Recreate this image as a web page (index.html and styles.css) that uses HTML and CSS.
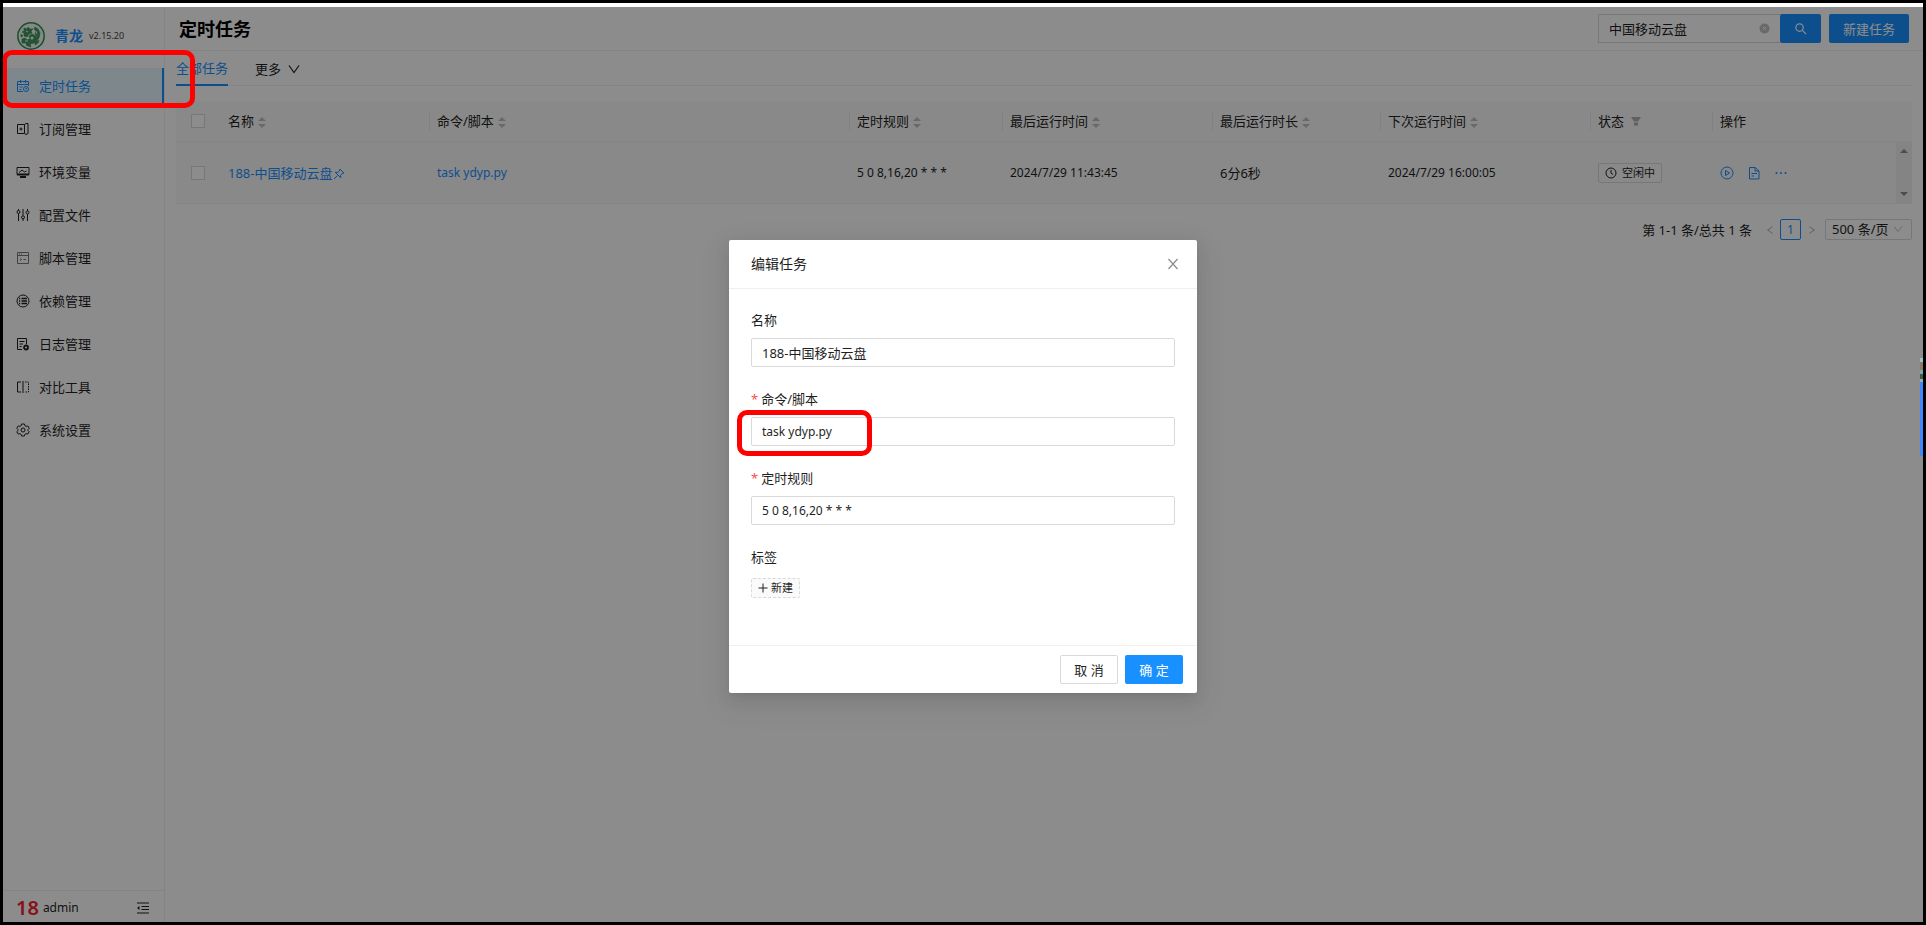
FILE: index.html
```html
<!DOCTYPE html>
<html lang="zh-CN">
<head>
<meta charset="utf-8">
<title>定时任务 - 青龙</title>
<link rel="stylesheet" href="styles.css">
</head>
<body>
<div class="app">
  <aside class="sidebar">
    <div class="brand">
      <svg class="brand-logo" viewBox="0 0 28 28">
        <circle cx="14" cy="14" r="13.2" fill="#f2f7f3" stroke="#2b9150" stroke-width="1.500"/>
        <g fill="#3f9a60" stroke="#2f8a50" stroke-width=".6" stroke-linejoin="round">
          <path d="M7 6l3 1 1-2 2 2 3 0-2 2 1 2-3 1-2 3-3-1 0-3-2-1 2-1z"/>
          <path d="M18 5l3 2 2 4-1 5-2 2 0-4-2-2 1-3-2-2z"/>
          <path d="M5 17l3-1 2 2 3-1-1-3 3-2 4 2 1 4-3 3-4 1 1 3-3-1-2-3-4 0z"/>
          <path d="M18 20l4-2-1 3-3 2zM4 12l2 2-2 1zM9 22l2 1-1 1z"/>
        </g>
        <circle cx="15" cy="16" r="1.500" fill="#f2f7f3"/>
        <path d="M9 9l2 1M19 9l1 3M8 19l3 0" stroke="#f2f7f3" fill="none"/>
      </svg>
      <span class="brand-name">青龙</span>
      <span class="brand-version">v2.15.20</span>
    </div>
    <nav class="menu">
      <a class="menu-item active" href="#">
        <svg viewBox="0 0 14 14"><path d="M7 12.500H1.500v-10h11V7M1.500 5.500h11M4.500 1v3M9.500 1v3M3.500 8h3M3.500 10.500h2"/><circle cx="10" cy="10" r="2.500"/><path d="M10 8.800V10h1"/></svg>
        定时任务</a>
      <a class="menu-item" href="#">
        <svg viewBox="0 0 14 14"><path d="M1.500 2.500h7v9h-7zM8.500 2.500l1.500-1h2v10l-2 1-1.500-1M3.500 7h3M5 5.500v3"/></svg>
        订阅管理</a>
      <a class="menu-item" href="#">
        <svg viewBox="0 0 14 14"><path d="M1 2.500h12v7H1zM3 7.500l3-2.500 2.500 2 2-1"/><path d="M1 9.500h12M4 12h6" stroke-width="2"/></svg>
        环境变量</a>
      <a class="menu-item" href="#">
        <svg viewBox="0 0 14 14"><path d="M2.500 1v1.500M2.500 5.500V13M7 1v6.500M7 11v2M11.500 1v2M11.500 6v7"/><circle cx="2.500" cy="4" r="1.500"/><circle cx="7" cy="9.300" r="1.500"/><circle cx="11.500" cy="4.500" r="1.500"/></svg>
        配置文件</a>
      <a class="menu-item light" href="#">
        <svg viewBox="0 0 14 14"><path d="M1.500 1.500h11v11h-11zM1.500 4.500h11M3 3h1M5 3h1M4 7.500l1.500 1L4 9.500M7.500 8.500H10"/></svg>
        脚本管理</a>
      <a class="menu-item" href="#">
        <svg viewBox="0 0 14 14"><circle cx="7" cy="7" r="6"/><path d="M5.500 4.500H11M5.500 7H11M5.500 9.500H11M3 4.500h1.200M3 7h1.200M3 9.500h1.200" stroke-width="1.500"/></svg>
        依赖管理</a>
      <a class="menu-item" href="#">
        <svg viewBox="0 0 14 14"><path d="M6 12.500H1.500v-11h9V7M3.500 4.500h5M3.500 7H7M3.500 9.500h2"/><circle cx="10" cy="10.500" r="2" stroke-width="1.800"/></svg>
        日志管理</a>
      <a class="menu-item" href="#">
        <svg viewBox="0 0 14 14"><path d="M5 2H1.500v10H5M7 1v12"/><path d="M9 2h3.500v10H9" stroke-dasharray="1.500 1"/></svg>
        对比工具</a>
      <a class="menu-item" href="#">
        <svg viewBox="0 0 14 14"><path d="M5.600 1h2.800l.5 1.700 1.200.7 1.700-.5 1.400 2.400L12 6.500v1l1.200 1.200-1.400 2.400-1.700-.5-1.200.7-.5 1.700H5.600l-.5-1.700-1.200-.7-1.700.5L.8 8.700 2 7.500v-1L.8 5.300l1.400-2.400 1.700.5 1.200-.7z"/><circle cx="7" cy="7" r="2"/></svg>
        系统设置</a>
    </nav>
    <div class="account">
      <span class="account-avatar">18</span>
      <span class="account-name">admin</span>
      <button class="icon-button" type="button" aria-label="收起菜单">
        <svg viewBox="0 0 14 14" fill="none" stroke="currentColor" stroke-width="1.200"><path d="M1 2h12M5.500 5.500H13M5.500 8.500H13M1 12h12"/><path d="M3.500 5v4L1 7z" fill="currentColor" stroke="none"/></svg>
      </button>
    </div>
  </aside>

  <div class="main">
    <header class="page-header">
      <h1>定时任务</h1>
      <form class="search">
        <input type="text" value="中国移动云盘" aria-label="搜索">
        <svg class="search-clear" viewBox="0 0 12 12"><circle cx="6" cy="6" r="5.500" fill="#bfbfbf"/><path d="M4.200 4.200l3.600 3.600M7.800 4.200L4.200 7.800" stroke="#fff"/></svg>
        <button class="primary search-button" type="button" aria-label="搜索"><svg viewBox="0 0 14 14" fill="none" stroke="currentColor" stroke-width="1.300"><circle cx="6" cy="6" r="4"/><path d="M9 9l4 4"/></svg></button>
      </form>
      <button class="primary create" type="button">新建任务</button>
    </header>

    <section class="content">
      <div class="tabs">
        <a class="tab active" href="#">全部任务</a>
        <a class="tab" href="#">更多
          <svg viewBox="0 0 12 12" fill="none" stroke="currentColor" stroke-width="1.200"><path d="M1 2.500L6 9.500l5-7"/></svg></a>
      </div>

      <div class="table-wrap">
        <table>
          <colgroup><col class="c-check"><col class="c-name"><col><col class="c-rule"><col class="c-time"><col class="c-span"><col class="c-time"><col class="c-state"><col class="c-action"></colgroup>
          <thead>
            <tr>
              <th class="check"><input type="checkbox" aria-label="全选"></th>
              <th>名称<i class="sorter"></i></th>
              <th>命令/脚本<i class="sorter"></i></th>
              <th>定时规则<i class="sorter"></i></th>
              <th>最后运行时间<i class="sorter"></i></th>
              <th>最后运行时长<i class="sorter"></i></th>
              <th>下次运行时间<i class="sorter"></i></th>
              <th>状态<svg class="filter" viewBox="0 0 10 10"><path d="M0 1h10L7 5.500H3zM3 6.500h4v3H3z" fill="#b0b0b0"/></svg></th>
              <th>操作</th>
            </tr>
          </thead>
          <tbody>
            <tr>
              <td class="check"><input type="checkbox" aria-label="选择"></td>
              <td><a href="#">188-中国移动云盘<svg class="pin" viewBox="0 0 12 12" fill="none" stroke="currentColor"><path d="M7 1l4 4-2 .5-1.500 2 .3 2.300L2.200 4.200l2.300.3 2-1.500zM4.500 7.500L1 11"/></svg></a></td>
              <td class="latin"><a href="#">task ydyp.py</a></td>
              <td class="latin">5 0 8,16,20 * * *</td>
              <td class="latin">2024/7/29 11:43:45</td>
              <td>6分6秒</td>
              <td class="latin">2024/7/29 16:00:05</td>
              <td><span class="tag"><svg viewBox="0 0 12 12" fill="none" stroke="currentColor"><circle cx="6" cy="6" r="5"/><path d="M6 3v3.200l2 1.300"/></svg>空闲中</span></td>
              <td><div class="actions">
                <a href="#" aria-label="运行"><svg viewBox="0 0 14 14" fill="none" stroke="currentColor"><circle cx="7" cy="7" r="6"/><path d="M5.500 4.500v5L9.500 7z"/></svg></a>
                <a href="#" aria-label="日志"><svg viewBox="0 0 14 14" fill="none" stroke="currentColor"><path d="M2.500 1.500H8L12 5v8H2.500zM8 1.500V5h4M4.500 7.500H10M4.500 10H7"/></svg></a>
                <a href="#" aria-label="更多"><svg viewBox="0 0 14 14" fill="currentColor"><circle cx="2.500" cy="7" r="1"/><circle cx="7" cy="7" r="1"/><circle cx="11.500" cy="7" r="1"/></svg></a>
              </div></td>
            </tr>
          </tbody>
        </table>
        <div class="scrollbar"><i class="up"></i><i class="down"></i></div>
      </div>

      <div class="pagination">
        <span class="total">第 1-1 条/总共 1 条</span>
        <button class="arrow" type="button" aria-label="上一页"><svg viewBox="0 0 10 10" fill="none" stroke="currentColor"><path d="M8 1L2 5l6 4"/></svg></button>
        <button class="page" type="button">1</button>
        <button class="arrow" type="button" aria-label="下一页"><svg viewBox="0 0 10 10" fill="none" stroke="currentColor"><path d="M2 1l6 4-6 4"/></svg></button>
        <span class="size">
          <select aria-label="每页条数"><option>500 条/页</option></select>
          <svg viewBox="0 0 10 10" fill="none" stroke="currentColor"><path d="M1 2.500l4 5 4-5"/></svg>
        </span>
      </div>
    </section>
  </div>

  <div class="side-widget"></div>
  <div class="mask">
    <div class="modal" role="dialog" aria-labelledby="modal-title">
      <div class="modal-header">
        <h2 id="modal-title">编辑任务</h2>
        <button class="close" type="button" aria-label="关闭"><svg viewBox="0 0 12 12" fill="none" stroke="currentColor" stroke-width="1.200"><path d="M1.500 1l9 10M10.500 1l-9 10"/></svg></button>
      </div>
      <form class="modal-body">
        <div class="field">
          <label for="name">名称</label>
          <input id="name" type="text" value="188-中国移动云盘">
        </div>
        <div class="field">
          <label class="required" for="command">命令/脚本</label>
          <div class="control">
            <input id="command" class="latin" type="text" value="task ydyp.py">
            <span class="highlight highlight-command"></span>
          </div>
        </div>
        <div class="field">
          <label class="required" for="rule">定时规则</label>
          <input id="rule" class="latin" type="text" value="5 0 8,16,20 * * *">
        </div>
        <div class="field tag-field">
          <label for="new-tag">标签</label>
          <button id="new-tag" class="new-tag" type="button"><svg viewBox="0 0 10 10" fill="none" stroke="currentColor"><path d="M5 .5v9M.5 5h9"/></svg>新建</button>
        </div>
      </form>
      <div class="modal-footer">
        <button class="default" type="button">取 消</button>
        <button class="primary" type="button">确 定</button>
      </div>
    </div>
  </div>
  <span class="highlight highlight-menu"></span>
</div>
</body>
</html>
```
FILE: styles.css
```css
* { box-sizing: border-box; }

body {
  margin: 0;
  height: 100vh;
  padding-top: 4px;
  border: 3px solid #000;
  background: #fff;
  color: #1f1f1f;
  font: 13px/20px "Noto Sans", "Noto Sans CJK SC", sans-serif;
  display: flex;
}

a { color: #1890ff; text-decoration: none; }
h1, h2 { margin: 0; }
svg { display: block; flex: none; }

button, input, select { font: inherit; color: inherit; margin: 0; }
button { cursor: pointer; padding: 0; border: 0; background: none; }

.latin { font-size: 12px; }

.app { position: relative; flex: 1; display: flex; min-width: 0; }

/* Sidebar */
.sidebar {
  width: 162px;
  flex: none;
  display: flex;
  flex-direction: column;
  border-right: 1px solid #f0f0f0;
}
.brand { height: 61px; padding: 0 14px 4px; display: flex; align-items: center; gap: 6px; }
.brand-logo { width: 28px; height: 28px; margin-right: 4px; }
.brand-name { color: #1890ff; font-size: 14px; font-weight: 700; }
.brand-version { font-size: 9px; color: #444; }

.menu { flex: 1; display: flex; flex-direction: column; gap: 8px; }
.menu-item {
  height: 35px;
  padding: 0 13px;
  display: flex;
  align-items: center;
  gap: 9px;
  color: #1f1f1f;
}
.menu-item svg { width: 14px; height: 14px; fill: none; stroke: currentColor; stroke-width: 1; }
.menu-item.light svg { opacity: .6; }
.menu-item.active { color: #1890ff; background: #e6f7ff; border-right: 2px solid #1890ff; }

.account {
  height: 32px;
  padding: 2px 14px 0 13px;
  border-top: 1px solid #f0f0f0;
  display: flex;
  align-items: center;
  gap: 4px;
}
.account-avatar { color: #f5222d; font-size: 20px; font-weight: 600; }
.account-name { font-size: 12px; }
.icon-button { margin-left: auto; }
.icon-button svg { width: 14px; height: 14px; }

/* Header */
.main { flex: 1; min-width: 0; }
.page-header {
  height: 44px;
  padding: 0 14px;
  border-bottom: 1px solid #f0f0f0;
  display: flex;
  align-items: center;
}
.page-header h1 { flex: 1; font-size: 18px; line-height: 28px; font-weight: 700; color: #000; }
.search { position: relative; display: flex; margin-right: 8px; }
.search input {
  width: 182px;
  height: 29px;
  padding: 0 32px 0 10px;
  border: 1px solid #d9d9d9;
  border-right: 0;
  background: #fff;
}
.search-clear { position: absolute; right: 51px; top: 9px; width: 11px; height: 11px; }
.primary { height: 29px; border-radius: 2px; background: #1890ff; color: #fff; }
.search-button { width: 41px; display: grid; place-items: center; }
.search-button svg { width: 13px; height: 13px; }
.create { width: 80px; }

/* Tabs */
.content { padding: 0 11px; }
.tabs { height: 35px; border-bottom: 1px solid #f0f0f0; display: flex; gap: 27px; }
.tab { height: 35px; display: flex; align-items: center; gap: 7px; color: #1f1f1f; }
.tab svg { width: 12px; height: 12px; }
.tab.active { color: #1890ff; border-bottom: 2px solid #1890ff; }

/* Table */
.table-wrap { position: relative; margin-top: 15px; }
table { width: 100%; table-layout: fixed; border-collapse: separate; border-spacing: 0; }
.c-check { width: 44px; }
.c-name { width: 209px; }
.c-rule { width: 153px; }
.c-time { width: 210px; }
.c-span { width: 168px; }
.c-state { width: 122px; }
.c-action { width: 200px; }
th, td { padding: 0 8px; text-align: left; font-weight: 400; background: #fafafa; border-bottom: 1px solid #f0f0f0; white-space: nowrap; }
th { height: 41px; position: relative; }
td { height: 62px; }
th:not(.check):not(:nth-child(2))::before {
  content: "";
  position: absolute;
  left: 0;
  top: 11px;
  height: 19px;
  border-left: 1px solid #ececec;
}
.check { text-align: center; }
input[type="checkbox"] {
  appearance: none;
  display: block;
  width: 14px;
  height: 14px;
  margin: 0 auto;
  border: 1px solid #d9d9d9;
  background: #fff;
}
.sorter { display: inline-flex; flex-direction: column; gap: 3px; margin-left: 4px; vertical-align: middle; }
.sorter::before, .sorter::after { content: ""; border: 4px solid transparent; }
.sorter::before { border-top: 0; border-bottom-color: #bfbfbf; }
.sorter::after { border-bottom: 0; border-top-color: #bfbfbf; }
.filter { display: inline-block; width: 10px; height: 10px; margin-left: 7px; }
.pin { display: inline-block; width: 12px; height: 12px; vertical-align: middle; }
.tag {
  display: inline-flex;
  align-items: center;
  gap: 5px;
  height: 20px;
  padding: 0 6px;
  border: 1px solid #d9d9d9;
  border-radius: 2px;
  font-size: 11px;
  vertical-align: middle;
}
.tag svg { width: 12px; height: 12px; }
.actions { display: flex; gap: 13px; }
.actions svg { width: 14px; height: 14px; }
.scrollbar {
  position: absolute;
  right: 0;
  top: 41px;
  bottom: 1px;
  width: 16px;
  padding: 7px 0;
  background: #f1f1f1;
  display: flex;
  flex-direction: column;
  align-items: center;
  justify-content: space-between;
}
.scrollbar i { border: 4px solid transparent; }
.scrollbar .up { border-top: 0; border-bottom-color: #8c8c8c; }
.scrollbar .down { border-bottom: 0; border-top-color: #8c8c8c; }

/* Pagination */
.pagination { margin-top: 15px; display: flex; justify-content: flex-end; align-items: center; }
.total { margin-right: 8px; }
.arrow { width: 19px; height: 21px; color: #999; display: grid; place-items: center; }
.arrow svg { width: 8px; height: 10px; }
.page { width: 21px; height: 21px; border: 1px solid #1890ff; border-radius: 2px; color: #1890ff; font-size: 12px; line-height: 19px; margin: 0 1px; }
.size { position: relative; margin-left: 4px; color: #1f1f1f; }
.size select {
  display: block;
  appearance: none;
  width: 87px;
  height: 21px;
  padding: 0 6px;
  border: 1px solid #d9d9d9;
  border-radius: 2px;
  background: #fff;
  line-height: 19px;
}
.size svg { position: absolute; right: 9px; top: 5px; width: 10px; height: 10px; color: #bfbfbf; pointer-events: none; }

/* Floating widget at the right edge */
.side-widget {
  position: absolute;
  z-index: 3;
  right: 0;
  top: 351px;
  width: 3px;
  height: 98px;
  background: linear-gradient(#9cc4c4 0 4px, #8a7a6c 4px 12px, #78a8a8 12px 16px, #46564c 16px 21px, #8cb4b4 21px 24px, #4086ff 24px);
}

/* Modal */
.mask {
  position: absolute;
  inset: 0;
  z-index: 2;
  background: rgba(0, 0, 0, .45);
  display: flex;
  justify-content: center;
  align-items: flex-start;
  padding-top: 233px;
}
.modal {
  width: 468px;
  border-radius: 2px;
  background: #fff;
  box-shadow: 0 3px 6px -4px rgba(0, 0, 0, .12), 0 6px 16px rgba(0, 0, 0, .08), 0 9px 28px 8px rgba(0, 0, 0, .05);
}
.modal-header {
  height: 49px;
  padding: 0 18px 0 22px;
  border-bottom: 1px solid #f0f0f0;
  display: flex;
  align-items: center;
  justify-content: space-between;
}
.modal-header h2 { font-size: 14px; font-weight: 400; }
.close { color: #8c8c8c; }
.close svg { width: 12px; height: 12px; }
.modal-body { padding: 21px 22px 47px; display: flex; flex-direction: column; gap: 22px; }
.field { display: flex; flex-direction: column; align-items: flex-start; gap: 8px; }
.tag-field { gap: 11px; }
.required::before { content: "*"; color: #ff4d4f; margin-right: 3px; }
.control { position: relative; width: 100%; }
.field input {
  display: block;
  width: 100%;
  height: 29px;
  padding: 0 10px;
  border: 1px solid #d9d9d9;
  border-radius: 2px;
  background: #fff;
}
.new-tag {
  display: flex;
  align-items: center;
  gap: 3px;
  height: 20px;
  padding: 0 6px;
  border: 1px dashed #d9d9d9;
  border-radius: 2px;
  background: #fafafa;
  font-size: 11px;
}
.new-tag svg { width: 10px; height: 10px; }
.modal-footer {
  padding: 9px 14px;
  border-top: 1px solid #f0f0f0;
  display: flex;
  justify-content: flex-end;
  gap: 7px;
}
.modal-footer button { width: 58px; }
.default { height: 29px; border: 1px solid #d9d9d9; border-radius: 2px; background: #fff; }

/* Red annotation frames */
.highlight { position: absolute; border: 5px solid #f00; border-radius: 10px; pointer-events: none; }
.highlight-command { left: -14px; top: -7px; width: 135px; height: 46px; }
.highlight-menu { z-index: 4; left: -1px; top: 43px; width: 193px; height: 58px; }
```
